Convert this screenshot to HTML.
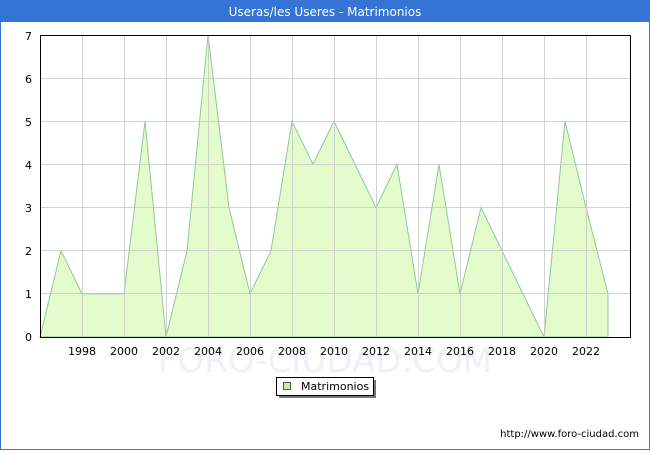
<!DOCTYPE html>
<html><head><meta charset="utf-8"><style>
body{margin:0;width:650px;height:450px;overflow:hidden;background:#fff;font-family:"DejaVu Sans","Liberation Sans",sans-serif;}
</style></head><body>
<svg width="650" height="450" xmlns="http://www.w3.org/2000/svg" font-family="DejaVu Sans, Liberation Sans, sans-serif">
<rect x="0.5" y="0.5" width="649" height="449" fill="#fff" stroke="#3474d4" stroke-width="1"/>
<rect x="0" y="0" width="650" height="22" fill="#3474d4"/>
<text x="325" y="16" fill="#fff" font-size="12" text-anchor="middle">Useras/les Useres - Matrimonios</text>
<text x="325" y="372" font-size="34" fill="#eef0fa" text-anchor="middle">FORO-CIUDAD.COM</text>
<polygon fill="#e4fccc" stroke="#8cc99c" stroke-width="1" points="40,337 61,250.7 82,293.9 103,293.9 124,293.9 145,121.3 166,337 187,250.7 208,35 229,207.6 250,293.9 271,250.7 292,121.3 313,164.4 334,121.3 355,164.4 376,207.6 397,164.4 418,293.9 439,164.4 460,293.9 481,207.6 502,250.7 523,293.9 544,337 565,121.3 586,207.6 608,293.9 608,337"/>
<g stroke="#c8c8c8" stroke-width="1" opacity="0.8">
<line x1="40" y1="293.5" x2="630" y2="293.5"/><line x1="40" y1="250.5" x2="630" y2="250.5"/><line x1="40" y1="207.5" x2="630" y2="207.5"/><line x1="40" y1="164.5" x2="630" y2="164.5"/><line x1="40" y1="121.5" x2="630" y2="121.5"/><line x1="40" y1="78.5" x2="630" y2="78.5"/>
<line x1="82.5" y1="35" x2="82.5" y2="337"/><line x1="124.5" y1="35" x2="124.5" y2="337"/><line x1="166.5" y1="35" x2="166.5" y2="337"/><line x1="208.5" y1="35" x2="208.5" y2="337"/><line x1="250.5" y1="35" x2="250.5" y2="337"/><line x1="292.5" y1="35" x2="292.5" y2="337"/><line x1="334.5" y1="35" x2="334.5" y2="337"/><line x1="376.5" y1="35" x2="376.5" y2="337"/><line x1="418.5" y1="35" x2="418.5" y2="337"/><line x1="460.5" y1="35" x2="460.5" y2="337"/><line x1="502.5" y1="35" x2="502.5" y2="337"/><line x1="544.5" y1="35" x2="544.5" y2="337"/><line x1="586.5" y1="35" x2="586.5" y2="337"/>
</g>
<rect x="40.5" y="35.5" width="590" height="302" fill="none" stroke="#000" stroke-width="1"/>
<g font-size="11" fill="#000" text-anchor="end">
<text x="32" y="341">0</text><text x="32" y="298">1</text><text x="32" y="255">2</text><text x="32" y="212">3</text><text x="32" y="169">4</text><text x="32" y="126">5</text><text x="32" y="83">6</text><text x="32" y="40">7</text>
</g>
<g font-size="11" fill="#000" text-anchor="middle">
<text x="82" y="355">1998</text><text x="124" y="355">2000</text><text x="166" y="355">2002</text><text x="208" y="355">2004</text><text x="250" y="355">2006</text><text x="292" y="355">2008</text><text x="334" y="355">2010</text><text x="376" y="355">2012</text><text x="418" y="355">2014</text><text x="460" y="355">2016</text><text x="502" y="355">2018</text><text x="544" y="355">2020</text><text x="586" y="355">2022</text>
</g>
<rect x="279" y="380" width="97" height="18" fill="#777"/>
<rect x="276.5" y="377.5" width="97" height="18" fill="#fff" stroke="#000"/>
<rect x="283.5" y="382.5" width="7" height="7" fill="#c4f0a0" stroke="#555"/>
<text x="301" y="390" font-size="11">Matrimonios</text>
<text x="639" y="437" font-size="10" text-anchor="end">http://www.foro-ciudad.com</text>
</svg>
</body></html>
